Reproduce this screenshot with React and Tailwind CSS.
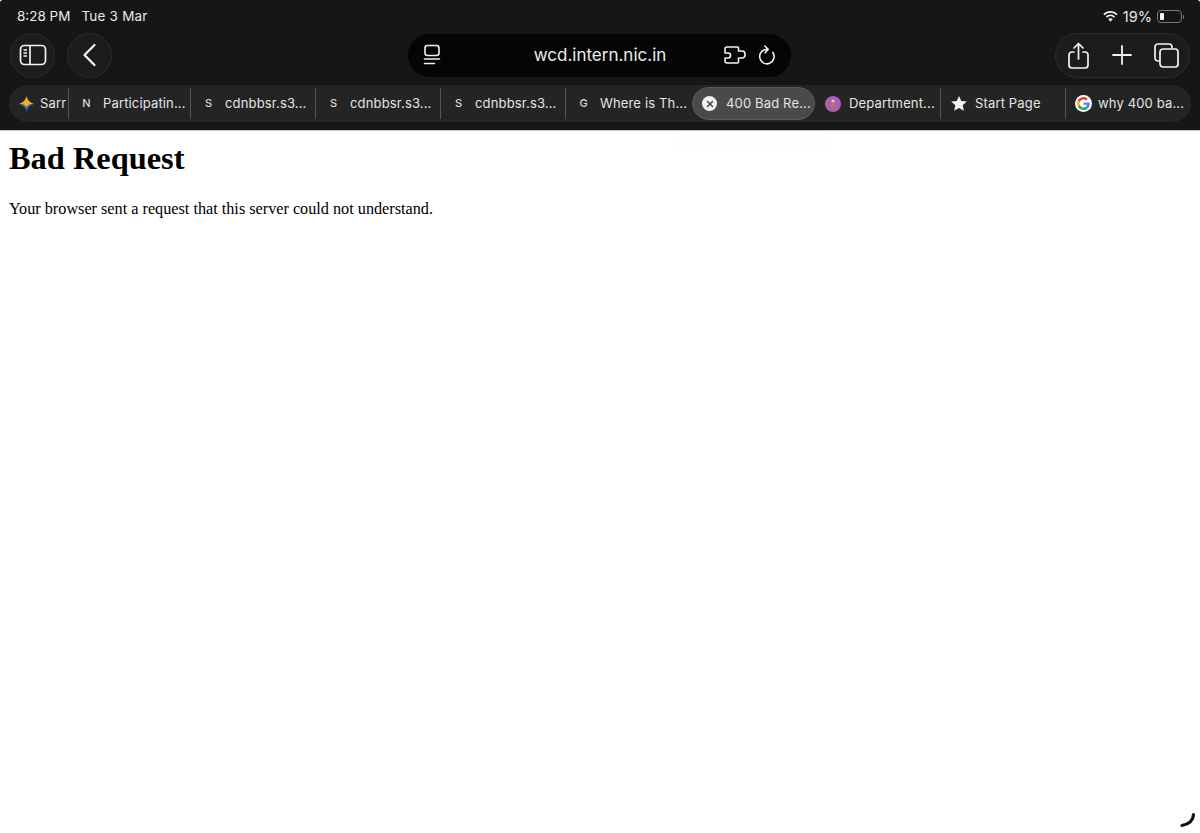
import React from 'react';
import { X } from 'lucide-react';

const SidebarIcon = () => (
  <svg width="28" height="22" viewBox="0 0 28 22" fill="none" stroke="#f2f2f2" strokeWidth="1.7">
    <rect x="1.5" y="1.5" width="25" height="19" rx="4" />
    <path d="M11 1.5v19" />
    <path d="M4.5 6h3.5M4.5 9h3.5M4.5 12h3.5" strokeWidth="1.4" />
  </svg>
);

const BackIcon = () => (
  <svg width="16" height="24" viewBox="0 0 16 24" fill="none" stroke="#f2f2f2" strokeWidth="2.2" strokeLinecap="round" strokeLinejoin="round">
    <path d="M12.500 2 2.500 12l10 10" />
  </svg>
);

const ReaderIcon = () => (
  <svg width="18" height="22" viewBox="0 0 18 22" fill="none" stroke="#f2f2f2" strokeWidth="1.6" strokeLinecap="round">
    <rect x="2" y="1.5" width="14" height="10" rx="2.5" />
    <path d="M1.5 15h15M1.5 19.5h10" />
  </svg>
);

const ExtensionIcon = () => (
  <svg width="22" height="18" viewBox="0 0 22 18" fill="none" stroke="#f2f2f2" strokeWidth="1.6" strokeLinejoin="round" strokeLinecap="round">
    <path d="M3 1h10.500a1 1 0 0 1 1 1v3h3.500a3 3 0 0 1 3 3v1a3 3 0 0 1-3 3h-3.500v4a1 1 0 0 1-1 1H3a2 2 0 0 1-2-2v-3h3a2.500 2.500 0 0 0 0-5H1V3a2 2 0 0 1 2-2Z" />
  </svg>
);

const ReloadIcon = () => (
  <svg width="18" height="20" viewBox="0 0 18 20" fill="none" stroke="#f2f2f2" strokeWidth="1.6" strokeLinecap="round" strokeLinejoin="round">
    <path d="M14.800 7.500A7.200 7.200 0 1 1 9.300 4.400" />
    <path d="M6.800 1l3.400 3.300L7.200 7.700" />
  </svg>
);

const ShareIcon = () => (
  <svg width="21" height="27" viewBox="0 0 21 27" fill="none" stroke="#f2f2f2" strokeWidth="1.7" strokeLinecap="round" strokeLinejoin="round">
    <path d="M6 10H4a3 3 0 0 0-3 3v10a3 3 0 0 0 3 3h13a3 3 0 0 0 3-3V13a3 3 0 0 0-3-3h-2" />
    <path d="M10.500 17V1.500M6 6l4.500-4.500L15 6" />
  </svg>
);

const PlusIcon = () => (
  <svg width="20" height="20" viewBox="0 0 20 20" fill="none" stroke="#f2f2f2" strokeWidth="1.8" strokeLinecap="round">
    <path d="M10 1v18M1 10h18" />
  </svg>
);

const TabsIcon = () => (
  <svg width="25" height="25" viewBox="0 0 25 25" fill="none" stroke="#f2f2f2" strokeWidth="1.7" strokeLinejoin="round">
    <path d="M5.500 18H4a3 3 0 0 1-3-3V4a3 3 0 0 1 3-3h11a3 3 0 0 1 3 3v1.500" />
    <rect x="6" y="6" width="18" height="18" rx="3" />
  </svg>
);

const WifiIcon = () => (
  <svg width="15" height="11" viewBox="0 0 15 11" fill="#f2f2f2">
    <path d="M7.500 0C4.700 0 2.200 1.100.3 2.900l1.200 1.300A8.700 8.700 0 0 1 7.500 1.800c2.300 0 4.400.9 6 2.400l1.200-1.300A10.500 10.500 0 0 0 7.500 0Z" />
    <path d="M7.500 3.600c-1.800 0-3.400.7-4.600 1.800l1.200 1.300a5 5 0 0 1 6.800 0l1.200-1.300a6.800 6.800 0 0 0-4.600-1.800Z" />
    <path d="M7.500 7.200c-.9 0-1.700.3-2.300.9l2.300 2.600 2.300-2.600c-.6-.6-1.400-.9-2.300-.9Z" />
  </svg>
);

const Battery = () => (
  <div className="flex items-center gap-[1px]">
    <div className="w-[25px] h-[13px] rounded-[4px] border border-[#77787a] p-[2px]">
      <div className="w-[4px] h-full rounded-[1px] bg-[#f2f2f2]" />
    </div>
    <div className="w-[1px] h-[4px] rounded-r bg-[#77787a]" />
  </div>
);

const SparkIcon = () => (
  <svg width="15" height="16" viewBox="0 0 15 16">
    <path d="M7.500 0C8.300 3.800 10.500 6.300 15 8H0C4.500 6.300 6.700 3.800 7.500 0Z" fill="#f7a823" />
    <path d="M0 8c4.500 1.700 6.700 4.200 7.500 8 .8-3.800 3-6.300 7.500-8Z" fill="#1f6aa5" />
    <path d="M3.500 8c2 .9 3.200 2 4 3.600.8-1.600 2-2.700 4-3.600Z" fill="#f7a823" />
  </svg>
);

const DeptIcon = () => (
  <svg width="16" height="16" viewBox="0 0 16 16">
    <circle cx="8" cy="8" r="8" fill="#a95fb0" />
    <circle cx="8" cy="5" r="1.600" fill="#e6c6dc" />
    <circle cx="8" cy="10" r="2.600" fill="#c0705f" />
  </svg>
);

const StarIcon = () => (
  <svg width="16" height="15" viewBox="0 0 16 15" fill="#f2f2f2">
    <path d="m8 0 2.300 5 5.500.6-4.100 3.700 1.200 5.400L8 12l-4.900 2.700 1.200-5.400L.2 5.600 5.700 5Z" />
  </svg>
);

const GoogleIcon = () => (
  <div className="w-[17px] h-[17px] rounded-full bg-white flex items-center justify-center shrink-0">
    <svg width="13" height="13" viewBox="0 0 48 48">
      <path fill="#EA4335" d="M24 9.500c3.500 0 6.700 1.200 9.200 3.600l6.900-6.900C35.900 2.400 30.500 0 24 0 14.600 0 6.500 5.400 2.600 13.200l8 6.200C12.500 13.700 17.800 9.500 24 9.500z" />
      <path fill="#4285F4" d="M47 24.500c0-1.600-.1-3.100-.4-4.500H24v9h12.900c-.6 3-2.200 5.500-4.700 7.200l7.700 6c4.500-4.200 7.100-10.300 7.100-17.700z" />
      <path fill="#FBBC05" d="M10.600 28.600c-.5-1.400-.8-3-.8-4.600s.3-3.200.8-4.600l-8-6.200C.9 16.500 0 20.100 0 24s.9 7.500 2.600 10.800z" />
      <path fill="#34A853" d="M24 48c6.500 0 11.900-2.100 15.900-5.800l-7.700-6c-2.200 1.400-4.900 2.300-8.200 2.300-6.200 0-11.500-4.200-13.400-9.900l-8 6.200C6.500 42.600 14.600 48 24 48z" />
    </svg>
  </div>
);

const CloseBadge = () => (
  <div className="w-[15px] h-[15px] rounded-full bg-[#f2f2f2] flex items-center justify-center shrink-0">
    <X size={10} strokeWidth={3.5} color="#444" />
  </div>
);

const Letter = ({ children }) => (
  <span className="w-[15px] text-center text-[11px] font-medium text-[#d8d8d8] shrink-0">{children}</span>
);

const Tab = ({ width, icon, title, gap = 'gap-[9px]', divider = true, clip = false }) => (
  <div className={`${width} h-full flex items-center shrink-0 relative`}>
    <div className={`flex items-center ${gap} pl-[10px] ${clip ? 'overflow-hidden w-full' : ''}`}>
      {icon}
      <span className="text-[13px] tracking-[0.15px] text-[#e4e4e4] whitespace-nowrap">{title}</span>
    </div>
    {divider && <div className="absolute right-0 top-[3px] bottom-[3px] w-px bg-[#555555]" />}
  </div>
);

export default function App() {
  return (
    <div
      className="relative w-full h-[833px] bg-white overflow-hidden"
      style={{ fontFamily: 'Inter, "Noto Sans", sans-serif' }}
    >
      <header className="h-[131px] bg-[#161616] border-b border-[#c4c4c4] rounded-t-[3px]">
        {/* status bar */}
        <div className="h-[33px] pl-[17px] pr-[16px] flex items-center justify-between text-[13.5px] text-[#e8e8e8]">
          <div className="flex gap-[11px]">
            <span>8:28 PM</span>
            <span className="tracking-[0.2px]">Tue 3 Mar</span>
          </div>
          <div className="flex items-center gap-[5px]">
            <WifiIcon />
            <span className="text-[14.5px]">19%</span>
            <Battery />
          </div>
        </div>

        {/* toolbar */}
        <div className="h-[44px] pl-[10px] pr-[10px] flex items-center justify-between">
          <div className="flex gap-[12px]">
            <button className="w-[45px] h-[45px] rounded-full bg-[#1c1c1c] border border-[#2c2c2c] flex items-center justify-center">
              <SidebarIcon />
            </button>
            <button className="w-[45px] h-[45px] rounded-full bg-[#1c1c1c] border border-[#2c2c2c] flex items-center justify-center">
              <BackIcon />
            </button>
          </div>
          <div className="w-[383px] h-[43px] rounded-full bg-[#050505] flex items-center justify-between pl-[15px] pr-[15px] ml-[32px]">
            <ReaderIcon />
            <span className="text-[17px] text-[#ececec] ml-[35px] pt-[2px]">wcd.intern.nic.in</span>
            <div className="flex items-center gap-[12px]">
              <ExtensionIcon />
              <ReloadIcon />
            </div>
          </div>
          <div className="w-[135px] h-[45px] rounded-full bg-[#1c1c1c] border border-[#2c2c2c] flex items-center justify-between pl-[12px] pr-[10px]">
            <ShareIcon />
            <PlusIcon />
            <TabsIcon />
          </div>
        </div>

        {/* tab bar */}
        <div className="mt-[8px] mx-[9px] h-[37px] rounded-full bg-[#242424] flex items-center">
          <Tab width="w-[60px]" icon={<SparkIcon />} title="Sarr" gap="gap-[6px]" clip />
          <Tab width="w-[122px]" icon={<Letter>N</Letter>} title="Participatin..." />
          <Tab width="w-[125px]" icon={<Letter>S</Letter>} title="cdnbbsr.s3..." />
          <Tab width="w-[125px]" icon={<Letter>S</Letter>} title="cdnbbsr.s3..." />
          <Tab width="w-[125px]" icon={<Letter>S</Letter>} title="cdnbbsr.s3..." />
          <Tab width="w-[126px]" icon={<Letter>G</Letter>} title="Where is Th..." divider={false} />
          <div className="w-[123px] h-[33px] rounded-full bg-[#4a4a4a] border border-[#5c5c5c] flex items-center gap-[9px] pl-[9px] shrink-0">
            <CloseBadge />
            <span className="text-[13px] tracking-[0.15px] text-[#e4e4e4] whitespace-nowrap">400 Bad Re...</span>
          </div>
          <Tab width="w-[126px]" icon={<DeptIcon />} title="Department..." gap="gap-[8px]" />
          <Tab width="w-[125px]" icon={<StarIcon />} title="Start Page" gap="gap-[8px]" />
          <div className="flex items-center gap-[6px] pl-[9px] shrink-0">
            <GoogleIcon />
            <span className="text-[13px] tracking-[0.15px] text-[#e4e4e4] whitespace-nowrap">why 400 ba...</span>
          </div>
        </div>
      </header>

      {/* page */}
      <main className="pl-[9px] pt-[9px] text-black" style={{ fontFamily: '"Liberation Serif", serif' }}>
        <h1 className="text-[32.4px] leading-[37px] font-bold">Bad Request</h1>
        <p className="mt-[23px] text-[16.23px] leading-[18px]">Your browser sent a request that this server could not understand.</p>
      </main>

      {/* faint ghost under the active tab */}
      <div className="absolute left-[675px] top-[138px] w-[155px] h-[12px] bg-[#fcfcfc] blur-[3px]" />

      {/* resize handle */}
      <svg className="absolute left-[1178px] top-[811px]" width="20" height="18" viewBox="0 0 20 18" fill="none" stroke="#111" strokeWidth="3.2" strokeLinecap="round">
        <path d="M15.500 3.500c-.2 5-3.500 9.300-11.500 11" />
      </svg>
    </div>
  );
}
